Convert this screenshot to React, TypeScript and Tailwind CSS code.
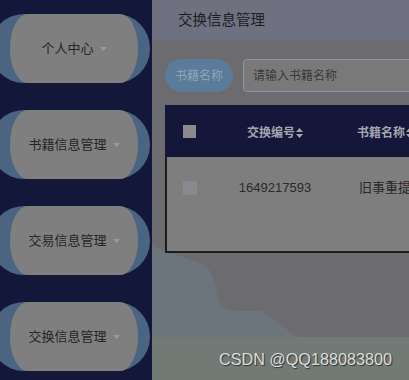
import React from "react";

const font = "font-['Liberation_Sans','Noto_Sans_CJK_SC',sans-serif]";

function Caret() {
  return (
    <svg width="7" height="4" viewBox="0 0 7 4" className="ml-[6px] mt-[1px]">
      <path d="M0 0 L7 0 L3.5 4 Z" fill="#9a9a9a" />
    </svg>
  );
}

function Sort({ color }: { color: string }) {
  return (
    <svg width="7" height="10" viewBox="0 0 7 10" className="ml-[1px]">
      <path d="M0 4 L3.5 0 L7 4 Z" fill={color} />
      <path d="M0 6 L7 6 L3.5 10 Z" fill={color} />
    </svg>
  );
}

function MenuItem({ label }: { label: string }) {
  return (
    <div className="ml-[-10px] w-[160px] h-[69px] rounded-[34px/34px] bg-[#4a6482] pl-[20px] shrink-0">
      <div className="w-[128px] h-full rounded-[18px/34px] bg-[#7f7f7f] flex items-center justify-center">
        <span className="text-[13px] text-[#262626] leading-none">{label}</span>
        <Caret />
      </div>
    </div>
  );
}

export default function App() {
  return (
    <div className={`w-[409px] h-[380px] overflow-hidden flex ${font}`}>
      <div className="w-[152px] h-full bg-[#13173a] flex flex-col pt-[14px] gap-[27px] shrink-0 overflow-hidden">
        <MenuItem label="个人中心" />
        <MenuItem label="书籍信息管理" />
        <MenuItem label="交易信息管理" />
        <MenuItem label="交换信息管理" />
      </div>
      <div className="relative flex-1 h-full bg-[#6b6b70] overflow-hidden">
        <svg className="absolute inset-0" width="257" height="380" viewBox="0 0 257 380">
          <path
            d="M0 246 C 22 254, 40 260, 50 264 C 62 270, 64 286, 66 300 C 70 310, 78 311, 92 311 L 110 311 L 145 337 L 0 337 Z"
            fill="#6d757c"
          />
          <rect x="0" y="337" width="257" height="43" fill="#727a76" />
        </svg>
        <div className="relative flex flex-col w-[600px]">
          <div className="h-[40px] bg-[#6f7080] flex items-center pl-[26px]">
            <span className="text-[14.5px] text-[#1e1e24] leading-none">交换信息管理</span>
          </div>
          <div className="pl-[13px] flex flex-col">
            <div className="mt-[19px] flex items-center">
              <div className="w-[68px] h-[33px] rounded-full bg-[#5a7b99] flex items-center justify-center">
                <span className="text-[12px] text-[#8ea6bb]">书籍名称</span>
              </div>
              <div className="ml-[10px] w-[300px] h-[33px] rounded-[4px] border border-[#8c97a6] bg-[#797979] flex items-center pl-[9px]">
                <span className="text-[12px] text-[#3a3a3a]">请输入书籍名称</span>
              </div>
            </div>
            <div className="mt-[13px] flex flex-col w-[400px]">
              <div className="h-[52px] bg-[#14173a] flex items-center">
                <div className="w-[48px] flex justify-center">
                  <div className="w-[13px] h-[13px] bg-[#8a8a8c]" />
                </div>
                <div className="w-[124px] flex justify-center items-center mt-[3px]">
                  <span className="text-[12px] font-bold text-[#a4a5ad]">交换编号</span>
                  <Sort color="#a4a5ad" />
                </div>
                <div className="w-[96px] flex justify-center items-center mt-[3px]">
                  <span className="text-[12px] font-bold text-[#a4a5ad]">书籍名称</span>
                  <Sort color="#a4a5ad" />
                </div>
              </div>
              <div className="h-[96px] bg-[#7e7e7e] border-l-2 border-b-2 border-[#1c1c1e] flex items-start pt-[24px]">
                <div className="w-[46px] flex justify-center">
                  <div className="w-[14px] h-[14px] bg-[#88888e]" />
                </div>
                <div className="w-[124px] flex justify-center">
                  <span className="text-[13px] text-[#2a2a2a] leading-[14px]">1649217593</span>
                </div>
                <div className="w-[96px] flex justify-center">
                  <span className="text-[13px] text-[#2a2a2a] leading-[14px]">旧事重提</span>
                </div>
              </div>
            </div>
          </div>
        </div>
        <div className="absolute right-[17px] bottom-[9px] text-[16.2px] text-[#dcdcdc] font-['Liberation_Sans',sans-serif] [text-shadow:1px_1px_1px_rgba(0,0,0,0.6)]">
          CSDN @QQ188083800
        </div>
      </div>
    </div>
  );
}
